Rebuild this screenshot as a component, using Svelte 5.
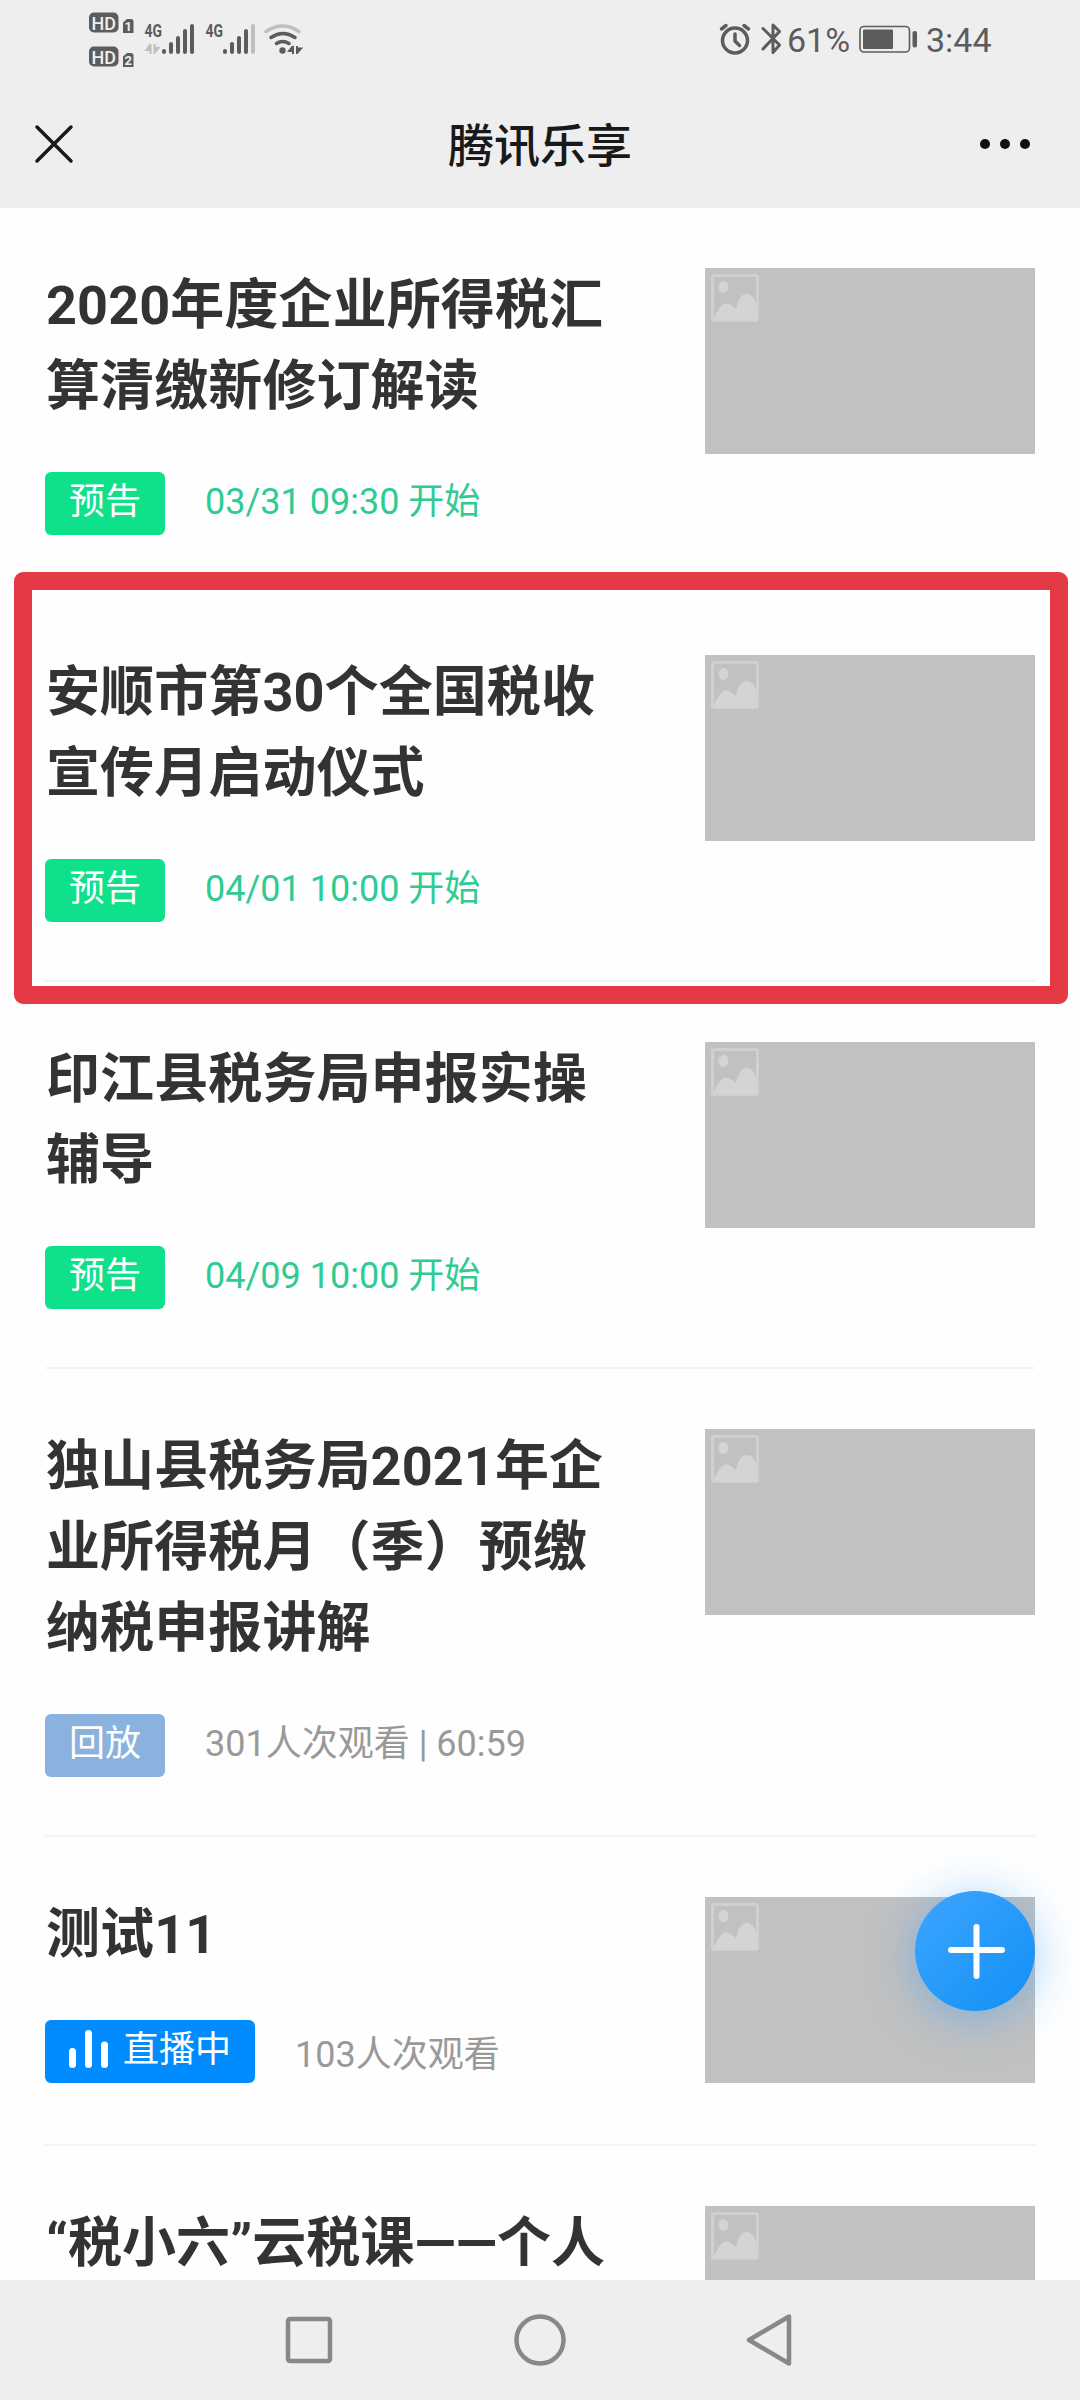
<script lang="ts">
	type Status = 'preview' | 'replay' | 'live';

	interface Course {
		title: string;
		status?: Status;
		meta?: string;
		highlight?: boolean;
	}

	const labels: Record<Status, string> = {
		preview: '预告',
		replay: '回放',
		live: '直播中'
	};

	const courses: Course[] = [
		{ title: '2020年度企业所得税汇算清缴新修订解读', status: 'preview', meta: '03/31 09:30 开始' },
		{ title: '安顺市第30个全国税收宣传月启动仪式', status: 'preview', meta: '04/01 10:00 开始', highlight: true },
		{ title: '印江县税务局申报实操辅导', status: 'preview', meta: '04/09 10:00 开始' },
		{ title: '独山县税务局2021年企业所得税月（季）预缴纳税申报讲解', status: 'replay', meta: '301人次观看 | 60:59' },
		{ title: '测试11', status: 'live', meta: '103人次观看' },
		{ title: '“税小六”云税课——个人' }
	];
</script>

<div class="screen">
	<div class="statusBar">
		<svg class="signals" width="220" height="80" viewBox="88 0 220 80">
			<g fill="#5c5c5c">
				<rect x="89" y="12.5" width="29.5" height="20" rx="5" />
				<rect x="89" y="46.5" width="29.5" height="20" rx="5" />
				<path d="M123 22.5l4-3.5h4q2.5 0 2.5 2.5v11.5H123zM123 56.5l4-3.5h4q2.5 0 2.5 2.5V67H123z" />
			</g>
			<g class="hd">
				<text x="91.500" y="29.5" textLength="24.5" lengthAdjust="spacingAndGlyphs">HD</text>
				<text x="91.500" y="63.5" textLength="24.5" lengthAdjust="spacingAndGlyphs">HD</text>
			</g>
			<g class="sim">
				<text x="128.3" y="31">1</text>
				<text x="128.3" y="65">2</text>
			</g>
			<g class="network">
				<text x="144.5" y="37" textLength="17.5" lengthAdjust="spacingAndGlyphs">4G</text>
				<text x="205.5" y="37" textLength="17.5" lengthAdjust="spacingAndGlyphs">4G</text>
			</g>
			<path d="M150.5 44v10M150.5 44l-4 6h4M154.5 44v10M154.5 53l4-5h-4" stroke="#bfbfbf" stroke-width="2" fill="#bfbfbf" />
			<g stroke="#5c5c5c" stroke-width="4" stroke-linecap="round">
				<path d="M164 51v1M171 44v8M178 38v14M185 31v21M192 26v26" />
				<path d="M225 51v1M232 44v8M239 38v14M246 31v21" />
				<path d="M253 26v26" stroke="#bfbfbf" />
			</g>
			<g fill="none" stroke-width="3.5" stroke-linecap="round">
				<path d="M266 31.5q16.500-11 33 0" stroke="#bfbfbf" />
				<path d="M271 37.5q12-8 24 0M276.500 43.500q6-4 12.500 0" stroke="#5c5c5c" />
			</g>
			<circle cx="282.5" cy="50.5" r="3.2" fill="#5c5c5c" />
			<path d="M293 46v8M293 46l-4 5h4M297 46v8M297 53l4-4.500h-4" stroke="#5c5c5c" stroke-width="2" fill="#5c5c5c" />
		</svg>

		<div class="statusRight">
			<svg width="66" height="80" viewBox="718 0 66 80" fill="none" stroke="#5c5c5c">
				<circle cx="735" cy="40.5" r="12.5" stroke-width="3.5" />
				<path d="M735 34v7l4.500 4.500" stroke-width="3.5" stroke-linecap="round" stroke-linejoin="round" />
				<path d="M721.500 29l4.500-3.500M748.500 29l-4.500-3.500" stroke-width="3.5" stroke-linecap="round" />
				<path d="M763 28.500l16.500 16.500-6.500 7.500V25l6.500 6.500L763 49" stroke-width="3" stroke-linejoin="round" stroke-linecap="round" />
			</svg>
			<span class="percent">61%</span>
			<svg width="60" height="80" viewBox="858 0 60 80">
				<rect x="860" y="26.5" width="49.5" height="25.5" rx="4" fill="none" stroke="#5c5c5c" stroke-width="1.6" />
				<rect x="863" y="29.5" width="30" height="19.5" rx="1" fill="#5c5c5c" />
				<rect x="912.5" y="31" width="4.5" height="16.5" rx="2" fill="#5c5c5c" />
			</svg>
			<span class="clock">3:44</span>
		</div>
	</div>

	<header>
		<svg width="42" height="42" viewBox="0 0 42 42" stroke="#191919" stroke-width="3.5" stroke-linecap="round">
			<path d="M4 4l34 34M38 4L4 38" />
		</svg>
		<h1>腾讯乐享</h1>
		<svg width="52" height="12" viewBox="0 0 52 12" fill="#111">
			<circle cx="6" cy="6" r="5" />
			<circle cx="26" cy="6" r="5" />
			<circle cx="46" cy="6" r="5" />
		</svg>
	</header>

	<main>
		{#each courses as course}
			<article class="course {course.status ?? ''}">
				<div class="info">
					<h2>{course.title}</h2>
					{#if course.status}
						<div class="metaRow">
							<span class="tag">
								{#if course.status === 'live'}
									<svg width="40" height="40" viewBox="0 0 40 40" stroke="#fff" stroke-width="7" stroke-linecap="round">
										<path d="M3.500 22.500v13M19.500 4.500v31M35.500 16v19.500" />
									</svg>
								{/if}
								<span>{labels[course.status]}</span>
							</span>
							<span class="meta">{course.meta}</span>
						</div>
					{/if}
				</div>
				<div class="thumb">
					<svg width="48" height="48" viewBox="0 0 48 48">
						<rect x="1.5" y="1.5" width="45" height="45" rx="2" fill="none" stroke="#d0d0d0" stroke-width="3" />
						<ellipse cx="12.5" cy="13" rx="5" ry="6" fill="#d4d4d4" />
						<path d="M3 46V44C7 36 10 29.500 15 29.500q4 0 10 5.500C27 26 30 20 36 20q6 0 9 9l1 1V46z" fill="#d4d4d4" />
					</svg>
				</div>
				{#if course.highlight}
					<div class="marker"></div>
				{/if}
			</article>
		{/each}
	</main>

	<button class="fab" aria-label="新建">
		<svg width="60" height="60" viewBox="0 0 60 60" stroke="#fff" stroke-width="6" stroke-linecap="round">
			<path d="M6 29h51M31.500 6v49" />
		</svg>
	</button>

	<nav>
		<svg width="52" height="56" viewBox="0 0 52 56"><rect x="5" y="7" width="42" height="42" rx="2" /></svg>
		<svg width="56" height="56" viewBox="0 0 56 56"><circle cx="28" cy="28" r="23.5" /></svg>
		<svg width="52" height="56" viewBox="0 0 52 56"><path d="M45 4.500v47L5 28z" stroke-linejoin="round" /></svg>
	</nav>
</div>

<style>
	:global(body) {
		margin: 0;
		background: #fff;
	}

	.screen {
		position: relative;
		display: flex;
		flex-direction: column;
		width: 1080px;
		height: 2400px;
		overflow: hidden;
		background: #fefefe;
		font-family: Roboto, 'Noto Sans CJK SC', sans-serif;
	}

	svg {
		display: block;
		flex: none;
	}

	.statusBar {
		display: flex;
		flex: none;
		justify-content: space-between;
		height: 80px;
		padding: 0 88px;
		background: #eee;
		color: #5c5c5c;
	}

	.hd text {
		font-size: 19px;
		font-weight: 500;
		fill: #eee;
	}

	.sim text {
		font-size: 13px;
		font-weight: 700;
		fill: #eee;
		text-anchor: middle;
	}

	.network text {
		font-size: 19px;
		font-weight: 700;
		fill: #5c5c5c;
	}

	.statusRight {
		display: flex;
		width: 274px;
		font-size: 34px;
		line-height: 80px;
	}

	.percent {
		width: 74px;
		padding-left: 3px;
		box-sizing: border-box;
	}

	.clock {
		padding-left: 8px;
	}

	header {
		display: flex;
		flex: none;
		align-items: center;
		justify-content: space-between;
		box-sizing: border-box;
		height: 128px;
		padding: 0 49px 0 33px;
		background: #eee;
	}

	h1 {
		margin: 3px 0 0 26px;
		font-size: 46px;
		font-weight: 500;
		line-height: 60px;
		color: #191919;
	}

	main {
		flex: 1;
		min-height: 0;
		padding: 0 45px;
		overflow: hidden;
	}

	.course {
		position: relative;
		display: flex;
		justify-content: space-between;
		padding: 60px 0 58px;
		border-bottom: 2px solid #f3f3f3;
	}

	.course:first-child {
		border-color: transparent;
	}

	.info {
		width: 570px;
	}

	h2 {
		margin: -3px 0 45px 1px;
		font-size: 54px;
		font-weight: 700;
		line-height: 81px;
		letter-spacing: 0.1px;
		color: #333;
	}

	.metaRow {
		display: flex;
		gap: 40px;
		height: 63px;
		font-size: 36px;
		line-height: 60px;
	}

	.tag {
		display: flex;
		box-sizing: border-box;
		height: 63px;
		padding: 0 24px;
		border-radius: 6px;
		color: #fff;
		background: #0fe18b;
	}

	.tag svg {
		margin: 9px 14px 0 0;
	}

	.meta {
		color: #999;
	}

	.preview .meta {
		color: #2fcb93;
	}

	.replay .tag {
		background: #8ab2de;
	}

	.live .tag {
		background: #008cff;
	}

	.live .metaRow {
		height: 66px;
	}

	.live .meta {
		padding-top: 5px;
	}

	.thumb {
		box-sizing: border-box;
		width: 330px;
		height: 186px;
		padding: 6px;
		background: #c1c1c1;
	}

	/* hand-drawn frame around the event being pointed out */
	.marker {
		position: absolute;
		top: -23px;
		left: -31px;
		box-sizing: border-box;
		width: 1054px;
		height: 432px;
		border: 18px solid #e43a45;
		border-radius: 9px;
	}

	.fab {
		position: absolute;
		top: 1891px;
		left: 915px;
		width: 120px;
		height: 120px;
		padding: 30px;
		border: 0;
		border-radius: 50%;
		background: linear-gradient(135deg, #3ea5ff, #1190f6);
		box-shadow: 0 6px 48px rgba(24, 144, 255, 0.4);
	}

	nav {
		display: flex;
		flex: none;
		align-items: center;
		justify-content: space-between;
		height: 120px;
		padding: 0 284px 0 283px;
		background: #eee;
	}

	nav svg {
		fill: none;
		stroke: #888;
		stroke-width: 4.5;
	}
</style>
